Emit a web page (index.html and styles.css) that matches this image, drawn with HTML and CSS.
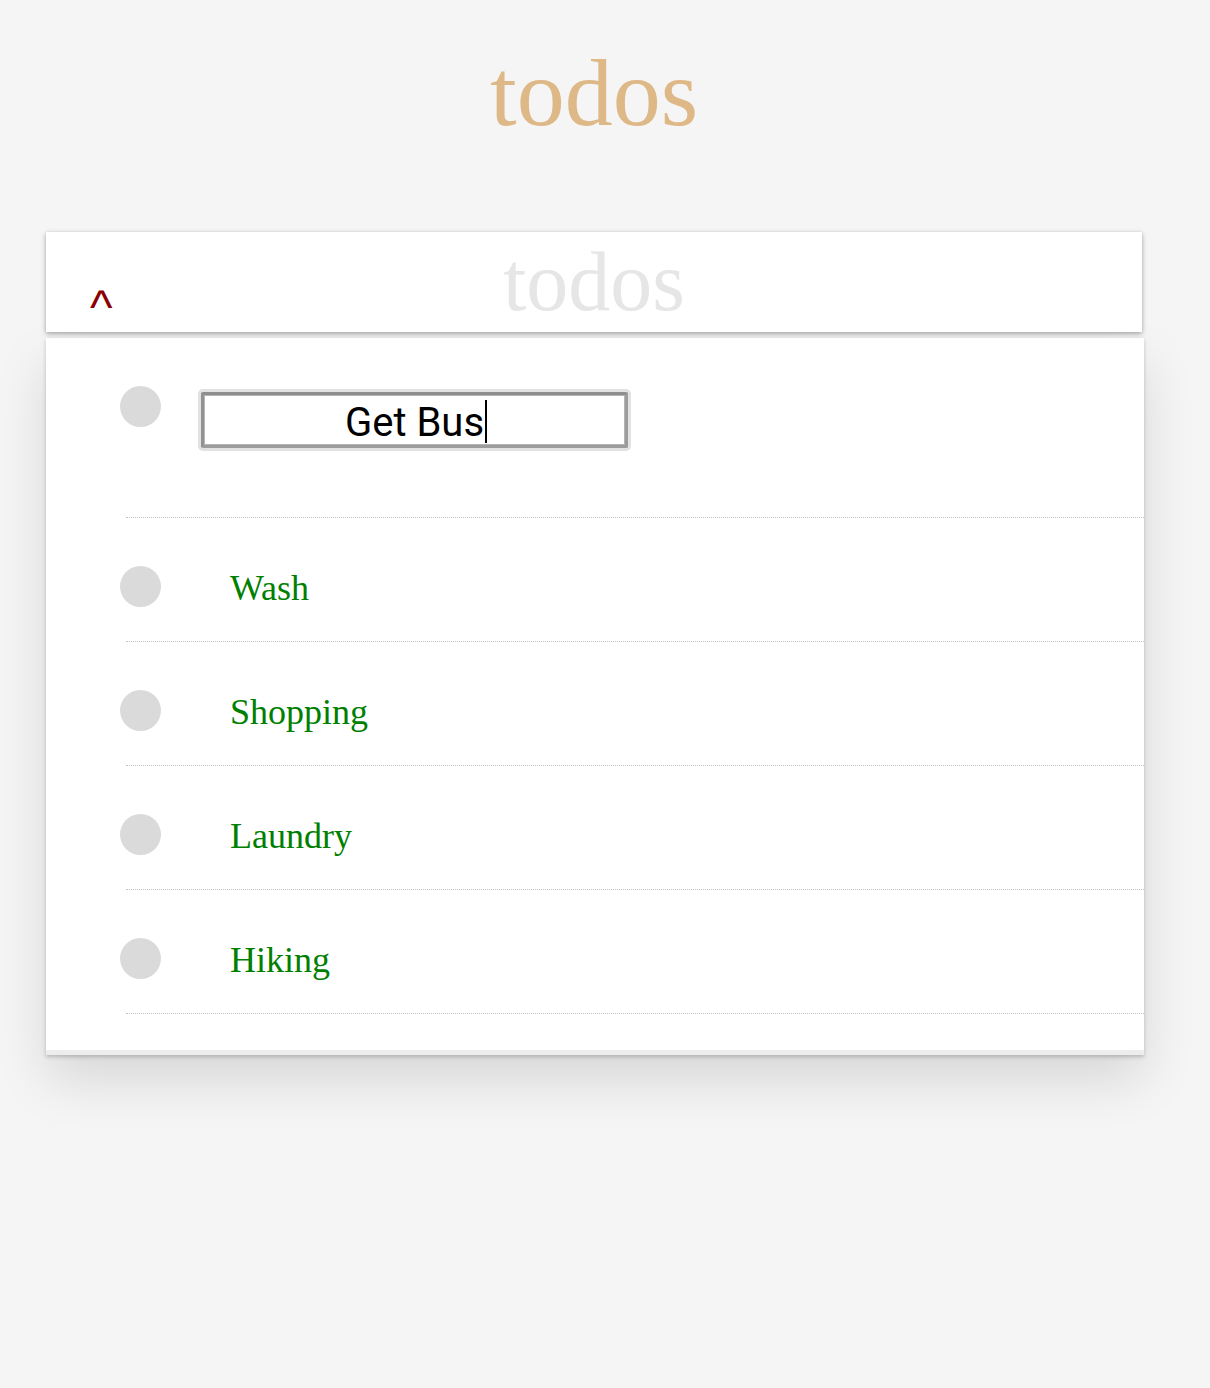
FILE: index.html
```html
<!DOCTYPE html>
<html lang="en">
<head>
<meta charset="utf-8">
<title>todos</title>
<link rel="stylesheet" href="styles.css">
</head>
<body>
<div class="app">
  <h1 class="title">todos</h1>
  <header class="head-card">
    <span class="toggle-all">^</span>
    <span class="placeholder">todos</span>
    <span class="spacer"></span>
  </header>
  <section class="list-card">
    <ul class="todo-list">
      <li class="todo editing">
        <span class="check"></span>
        <div class="edit-box"><span class="edit-text">Get Bus</span></div>
      </li>
      <li class="todo"><span class="check"></span><span class="label">Wash</span></li>
      <li class="todo"><span class="check"></span><span class="label">Shopping</span></li>
      <li class="todo"><span class="check"></span><span class="label">Laundry</span></li>
      <li class="todo"><span class="check"></span><span class="label">Hiking</span></li>
    </ul>
  </section>
</div>
</body>
</html>
```

FILE: styles.css
```css
html, body {
  margin: 0;
  padding: 0;
  background: #f5f5f5;
}

body {
  min-height: 1388px;
}

.app {
  width: 1098px;
  margin-left: 46px;
  padding-bottom: 200px;
}

.title {
  margin: 0;
  padding-top: 45px;
  width: 1096px;
  text-align: center;
  font-family: "Liberation Serif", "Times New Roman", serif;
  font-weight: normal;
  font-size: 96px;
  line-height: 96px;
  color: #deb887;
}

.head-card {
  margin-top: 91px;
  width: 1096px;
  height: 100px;
  box-sizing: border-box;
  background: #fff;
  box-shadow: 0 2px 5px rgba(0, 0, 0, 0.3), 0 0 3px rgba(0, 0, 0, 0.08);
  display: grid;
  grid-template-columns: 1fr auto 1fr;
  align-items: start;
  position: relative;
  z-index: 1;
}

.toggle-all {
  justify-self: start;
  margin-left: 44px;
  margin-top: 52px;
  font-family: "Liberation Sans", Arial, sans-serif;
  font-size: 48px;
  line-height: 48px;
  color: #8b0000;
}

.placeholder {
  margin-top: 8px;
  font-family: "Liberation Serif", "Times New Roman", serif;
  font-size: 84px;
  line-height: 84px;
  color: #e6e6e6;
}

.list-card {
  margin-top: 6px;
  width: 1098px;
  background: #fff;
  padding-bottom: 36px;
  border-bottom: 5px solid #ededed;
  box-shadow: 0 2px 4px rgba(0, 0, 0, 0.2), 0 25px 50px rgba(0, 0, 0, 0.12);
}

.todo-list {
  list-style: none;
  margin: 0;
  padding: 0 0 0 80px;
}

.todo {
  box-sizing: border-box;
  height: 124px;
  padding-top: 48px;
  border-bottom: 1px dotted #c4c4c4;
  display: flex;
  align-items: flex-start;
}

.todo.editing {
  height: 180px;
}

.check {
  flex: none;
  width: 41px;
  height: 41px;
  margin-left: -6px;
  border-radius: 50%;
  background: #dadada;
}

.label {
  margin-left: 69px;
  margin-top: 2px;
  font-family: "Liberation Serif", "Times New Roman", serif;
  font-size: 36px;
  line-height: 41px;
  color: #008000;
}

.edit-box {
  margin-left: 40px;
  margin-top: 6px;
  width: 427px;
  height: 56px;
  box-sizing: border-box;
  border: 3px solid #9c9c9c;
  border-top-color: #8e8e8e;
  border-left-color: #929292;
  border-radius: 2px;
  box-shadow: 0 0 0 3px #e2e2e2, inset 0 0 0 1px #b4b4b4;
  padding-top: 5px;
  text-align: center;
  font-family: Roboto, "Noto Sans", sans-serif;
  font-size: 40px;
  line-height: 46px;
  color: #000;
}

.edit-text {
  position: relative;
}

.edit-text::after {
  content: "";
  position: absolute;
  right: -3px;
  top: 1px;
  width: 2px;
  height: 43px;
  background: #000;
}
```
